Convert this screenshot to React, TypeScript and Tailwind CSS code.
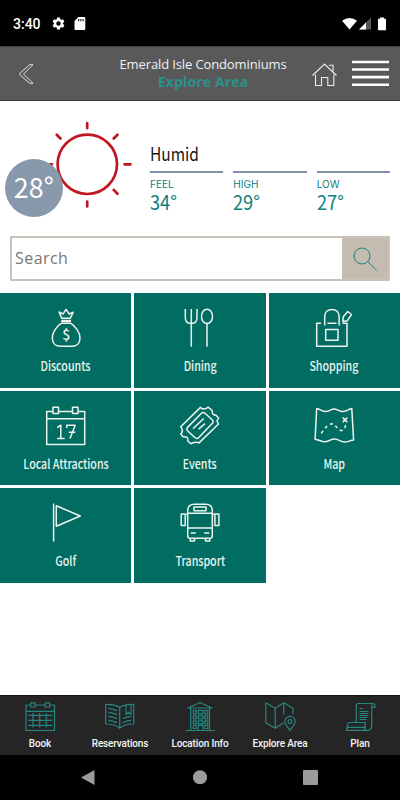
import * as React from "react";

const NOTO = "font-['Noto_Sans_CJK_SC',sans-serif]";

function TileIcon({ children }: { children: React.ReactNode }) {
    return (
        <svg viewBox="0 0 44 44" className="size-11 shrink-0" fill="none" stroke="#eef3ee" strokeWidth="1.5" strokeLinejoin="round">
            {children}
        </svg>
    );
}

function TabIcon({ children }: { children: React.ReactNode }) {
    return (
        <svg viewBox="0 0 36 36" className="size-9 shrink-0" fill="none" stroke="#268681" strokeWidth="1.2" strokeLinejoin="round">
            {children}
        </svg>
    );
}

const tiles = [
    {
        label: "Discounts",
        icon: (
            <TileIcon>
                <path d="M17.7 13.3 15 7l4 2 3-4.700L25.200 9l4-1.800-3 6.100Z" />
                <path d="M17.200 16h9.800" strokeWidth="2.400" />
                <path d="M17.500 18.200h9C31 21 36 27 36 33c0 5.600-3.600 8.300-8 8.300H16.500c-4.500 0-8.200-2.700-8.200-8.300 0-6 4.700-12 9.200-14.800Z" />
                <text x="22.200" y="34.800" textAnchor="middle" className="font-['Noto_Sans_CJK_SC',sans-serif] text-[14px] font-medium" fill="#eef3ee" stroke="none">$</text>
            </TileIcon>
        ),
    },
    {
        label: "Dining",
        icon: (
            <TileIcon>
                <path d="M7.300 4v8.500c0 4 2 6 6 6s5.700-2 5.700-6V4M13.300 4v37.700" />
                <ellipse cx="29" cy="11.400" rx="5.500" ry="7.200" />
                <path d="M29 18.600v23.100" />
            </TileIcon>
        ),
    },
    {
        label: "Shopping",
        icon: (
            <TileIcon>
                <path d="M9 18.300H4.700v23H35v-23h-4.500M15.500 18.300h9" />
                <path d="M12.700 20.500v-9c0-4.500 3-7 7.200-7s7.200 2.500 7.200 7v9" />
                <path d="M13.700 24.500H26v10.800H13.700z" />
                <path d="m35.700 6.500 3.800 3-4.300 6.300-4.400.7.500-4.800Z" />
            </TileIcon>
        ),
    },
    {
        label: "Local Attractions",
        icon: (
            <TileIcon>
                <path d="M9 8.500H2.700v33H40.700v-33H34.300M14.700 8.500h13.600M2.700 15.700h38" />
                <path d="M9 4.200h5.500v6.300H9zM28.500 4.200H34v6.300h-5.500z" />
                <path d="m13.200 24.700 3.600-2.600v13.400M13 35.500h7.700M22.700 25v-2.800h8.500l-5.200 13.300M24.700 29.300h6.600" />
            </TileIcon>
        ),
    },
    {
        label: "Events",
        icon: (
            <TileIcon>
                <path d="M22.500 4.400c2 2.200 5 1.900 7.700-.2l4 3.300c-.6 2.600.5 4.500 3.800 4.800l2.800 3c-2.300 1.300-2 3.300-.3 5.700L21 39.900c-3-1.700-5-.6-8 .8L9.700 38c1-3-1-4.800-4.600-4.200L2.700 31c2-2 2.300-4.500 0-7.200Z" />
                <path d="M23.200 10.500c1.300-1.200 2.700-1.200 4 0l7 6.300c1.300 1.200 1.200 2.500 0 3.700L20.800 34.400c-1.300 1.400-2.600 1.400-4 .1l-7-6.500c-1.300-1.200-1.300-2.600 0-3.900Z" />
                <path d="m15 25.700 10.700-10.200M20.500 26.300l6.500-5.700" />
            </TileIcon>
        ),
    },
    {
        label: "Map",
        icon: (
            <TileIcon>
                <path d="M4.700 5.600c3.500.6 6 3.200 9.300 3 3-.2 5-2.500 8-2.500s5.500 2.300 8.500 2.500c3.200.2 6-2.400 9.300-3l1.800 31.500c-3.300.2-6 2.200-9.300 2-3.300-.2-6.300-3-9.800-3s-6.500 2.700-9.800 2.700-6.300-2.300-9.600-2.600Z" />
                <path d="M9.300 30.300c3-4.500 6.500-9 10.700-9.500 4.500.2 4.700 7 10.300 6.700 2.700-.4 3.200-4 3.300-6.500" strokeDasharray="3 3.200" />
                <path d="m30.800 14.600 4.500 4.500M35.300 14.600l-4.500 4.500" />
            </TileIcon>
        ),
    },
    {
        label: "Golf",
        icon: (
            <TileIcon>
                <path d="M9.600 3.500v38M12.300 5.800 36.300 16l-24 10.300Z" />
            </TileIcon>
        ),
    },
    {
        label: "Transport",
        icon: (
            <TileIcon>
                <path d="M9.700 36V10.700c0-4.200 2.500-6.500 6.500-6.500h11.600c4 0 6.500 2.300 6.500 6.500V36c0 1.500-.8 2.300-2.300 2.300H12c-1.500 0-2.300-.8-2.300-2.300ZM9.700 13.200h24.600M9.700 28h24.600" />
                <path d="M16 7h12v3.700H16zM3.200 14h4v11.500h-4zM36.900 14h4v11.500h-4zM7.200 14.200h2.500M34.300 14.200h2.600" />
                <path d="M12.800 33h5M26.200 33h5M12.200 38.500V41h4.300v-2.500M27.500 38.500V41h4.300v-2.500" />
            </TileIcon>
        ),
    },
];

const tabs = [
    {
        label: "Book",
        icon: (
            <TabIcon>
                <path d="M8.500 6H4v25.500h28.500V6h-4.700M13 6h10.300M4 12.300h28.500" />
                <path d="M8.700 3.800H13V8H8.700zM23.300 3.800h4.300V8h-4.300z" />
                <path d="M6.300 16.300h24M6.300 21.300h24M6.300 26.300h24M11 14v14.500M17.700 14v14.500M24.300 14v14.500" />
            </TabIcon>
        ),
    },
    {
        label: "Reservations",
        icon: (
            <TabIcon>
                <path d="M17.700 8.300C14 5.800 10 5.200 3.700 5.300V25c6 0 10.500 1 14 4.300 3.500-3.300 8-4.300 14-4.300V5.300c-6.300-.1-10.300.5-14 3ZM17.700 8.300v21" />
                <path d="M6.500 9.300c3 .2 5.700 1 8.500 2.300M6.500 13.300c3 .2 5.700 1 8.500 2.300M6.500 17.300c3 .2 5.700 1 8.500 2.300M6.500 21.300c3 .2 5.700 1 8.500 2.300M20.500 19.700c2.800-1.300 5.500-2 8.500-2.300M20.500 23.700c2.800-1.300 5.500-2 8.500-2.300" />
                <path d="M24 6.300v9.200l2.500-2.300 2.500 2.300V5.500" />
            </TabIcon>
        ),
    },
    {
        label: "Location Info",
        icon: (
            <TabIcon>
                <path d="M6 9 18 3.500 30 9ZM8.700 9v22.300M27.500 9v22.300M3.700 31.500h29" />
                <path d="M11.300 11.300h3v3.500h-3zM16.300 11.300H21v3.500h-4.700zM22.800 11.300h3v3.500h-3zM11.300 16.800h3v3h-3zM16.300 16.800H21v3h-4.700zM22.800 16.800h3v3h-3zM11.300 21.800h3v3h-3zM16.300 21.800H21v3h-4.700zM22.800 21.800h3v3h-3zM11.300 26.500h3v3h-3zM22.800 26.500h3v3h-3zM16.300 31.300v-5H21v5" />
            </TabIcon>
        ),
    },
    {
        label: "Explore Area",
        icon: (
            <TabIcon>
                <path d="m3.800 3.800 9.400 5.500 8.500-5.500 9.300 5.500v6M3.800 3.800v20l9.400 5.500 8.300-5.200M13.200 9.300v20M21.700 3.800v12" />
                <path d="M28 31.500c-2.600-3.800-5.200-6-5.200-9a5.200 5.200 0 0 1 10.400 0c0 3-2.600 5.200-5.200 9Z" />
                <circle cx="28" cy="22.500" r="1.900" />
            </TabIcon>
        ),
    },
    {
        label: "Plan",
        icon: (
            <TabIcon>
                <path d="M14.300 23.500V6.500c0-1.300.7-2 2-2H31c1.300 0 2 .7 2 2v2h-3.300M30.700 4.500c-.8 1-1 2-1 4V26c0 3.500-1 5.300-3.800 5.300H4.300c1.700-1.500 1-4.300 1.500-6.500.2-.8.700-1.300 1.600-1.300h16c-.7 2.500.2 5.600-1.300 7.800" />
                <path d="M4.500 28.300H24M17.500 9.500h3.800M17.500 12.500h9M17.500 14.500h9M17.500 16.500h9M17.500 18.500h8M17.500 20.500h7" />
            </TabIcon>
        ),
    },
];

const temps = [
    { label: "FEEL", value: "34°" },
    { label: "HIGH", value: "29°" },
    { label: "LOW", value: "27°" },
];

function StatusBar() {
    return (
        <div className="flex h-[46px] items-center bg-black pl-[13px] pr-3 text-white">
            <span className="pt-0.5 font-['Roboto',sans-serif] text-[14px] font-medium leading-none">3:40</span>
            <svg viewBox="0 0 24 24" className="ml-[10px] size-[15px]" fill="#fff">
                <path d="M19.140 12.940a7 7 0 0 0 0-1.880l2.030-1.580a.5.5 0 0 0 .12-.61l-1.920-3.320a.5.5 0 0 0-.59-.22l-2.390.96a7 7 0 0 0-1.620-.94l-.36-2.540a.5.5 0 0 0-.48-.41h-3.840a.5.5 0 0 0-.47.41l-.36 2.540c-.59.24-1.130.57-1.620.94l-2.390-.96a.5.5 0 0 0-.59.22L2.740 8.870a.5.5 0 0 0 .12.61l2.030 1.580a7 7 0 0 0 0 1.880l-2.030 1.580a.5.5 0 0 0-.12.61l1.920 3.320c.12.220.37.290.59.220l2.390-.96c.5.380 1.030.7 1.620.94l.36 2.540c.05.240.24.410.48.410h3.840c.24 0 .44-.17.47-.41l.36-2.540a7 7 0 0 0 1.620-.94l2.390.96c.22.080.47 0 .59-.22l1.920-3.320a.5.5 0 0 0-.12-.61ZM12 15.600a3.600 3.600 0 1 1 0-7.200 3.600 3.600 0 0 1 0 7.200Z" />
            </svg>
            <svg viewBox="0 0 12 13" className="ml-[8px] h-[13px] w-3" fill="#fff">
                <path d="M4.500 0H10c.8 0 1.300.5 1.300 1.300v10.400c0 .8-.5 1.300-1.300 1.300H1.800C1 13 .5 12.500.5 11.700V4Z" />
                <path d="M4.700 2v2.300M6.900 2v2.300M9.100 2v2.300" stroke="#000" strokeWidth="1" />
            </svg>
            <svg viewBox="0 0 46 14" className="ml-auto mt-px h-3.5 w-[46px]">
                <path d="M0 3.800Q7.500-1.800 15 3.800L7.500 12.600Z" fill="#fff" />
                <path d="M29 .5v12H17Z" fill="#555" />
                <path d="M24 5.500v7h-7Z" fill="#fff" />
                <path d="M38 .5h4v1.200h2v11.600h-8V1.700h2Z" fill="#fff" />
            </svg>
        </div>
    );
}

function Header() {
    return (
        <header className="flex h-[55px] items-center border-y border-y-[#3d3d3e] bg-[#59595a]">
            <svg viewBox="0 0 16 20" className="ml-[18px] h-5 w-4" fill="none" stroke="#e2e2e2" strokeWidth="1">
                <path d="M11.500.7H15L5.500 10 15 19.300h-3.500L1.200 10Z" />
            </svg>
            <div className="-mt-0.5 ml-[68px] flex w-[202px] flex-col items-center whitespace-nowrap font-['Open_Sans',sans-serif]">
                <span className="text-[13px] leading-[17px] tracking-[-0.12px] text-[#f0f0f0]">Emerald Isle Condominiums</span>
                <span className="text-sm font-bold leading-[17px] tracking-[0.15px] text-[#2a918b]">Explore Area</span>
            </div>
            <svg viewBox="0 0 26 26" className="ml-[7px] mt-0.5 size-[26px]" fill="none" stroke="#ececec" strokeWidth="1.1">
                <path d="M1.500 13.500 13.500 2 25.500 13.500M18 3.200h4v6.500" />
                <path d="M4.500 12.500v11h6v-8h6.300v8h6v-11" />
            </svg>
            <svg viewBox="0 0 37 27" className="ml-[15px] h-[27px] w-[37px]" stroke="#fff" strokeWidth="2.6">
                <path d="M0 2h37M0 9.500h37M0 17.100h37M0 24.700h37" />
            </svg>
        </header>
    );
}

function Weather() {
    return (
        <section className="flex h-[135px] pt-[11px]">
            <div className="relative h-[110px] w-[150px] shrink-0">
                <svg viewBox="0 0 150 110" className="h-full w-full" fill="none" stroke="#c01522" strokeWidth="2.700" strokeLinecap="round">
                    <circle cx="87.300" cy="52.300" r="29.700" />
                    <path d="M87.200 11.200v5M87.200 89.500v5M124.500 52.300h6M46 52.300h6M56.700 22.700l3.800 3.800M117.500 22.700l-3.800 3.800M117.500 81.700l-3.800-3.800" />
                </svg>
                <div className={`absolute left-[5px] top-[47px] flex size-[58px] items-center justify-center rounded-full bg-[#8799aa] text-[28px] leading-none text-white ${NOTO}`}>
                    <span className="-mt-1 origin-center scale-x-[0.96]">28°</span>
                </div>
            </div>
            <div className={`flex-1 pr-2.5 pt-[30px] ${NOTO}`}>
                <p className="origin-left scale-x-[0.86] text-lg leading-[23px] text-[#161616]">Humid</p>
                <div className="mt-[6px] grid grid-cols-3 gap-2.5">
                    {temps.map((temp) => (
                        <div key={temp.label} className="border-t-2 border-[#7d93a9] pt-[5px] text-[#0d817b]">
                            <p className="font-['Inter',sans-serif] text-[10px] leading-3">{temp.label}</p>
                            <p className="origin-left scale-x-[0.91] text-[20px] leading-6">{temp.value}</p>
                        </div>
                    ))}
                </div>
            </div>
        </section>
    );
}

function SearchBar() {
    return (
        <div className="mx-2.5 flex h-[45px] border-2 border-[#cbc3b8]">
            <input
                type="text"
                placeholder="Search"
                className="min-w-0 flex-1 bg-white px-[3px] pb-0.5 font-['Open_Sans',sans-serif] text-base tracking-[0.45px] outline-none placeholder:text-[#777]"
            />
            <button type="button" className="flex w-[46px] items-center justify-center bg-[#c4bcb0]">
                <svg viewBox="0 0 24 24" className="size-6" fill="none" stroke="#168580" strokeWidth="1">
                    <circle cx="9" cy="9" r="8" />
                    <path d="m14.700 14.700 9 8.700" />
                </svg>
            </button>
        </div>
    );
}

export default function App() {
    const [activeTab, setActiveTab] = React.useState("Explore Area");

    return (
        <div className="flex h-[800px] w-[400px] flex-col overflow-hidden bg-white">
            <StatusBar />
            <Header />
            <main className="flex-1">
                <Weather />
                <SearchBar />
                <div className="mt-3 grid grid-cols-3 gap-[3px]">
                    {tiles.map((tile) => (
                        <a key={tile.label} className="flex h-[94.500px] flex-col items-center bg-[#006c62] pt-3">
                            {tile.icon}
                            <span className={`mt-2 scale-x-[0.82] whitespace-nowrap text-[13px] font-medium leading-[18px] text-[#edf3ee] ${NOTO}`}>{tile.label}</span>
                        </a>
                    ))}
                </div>
            </main>
            <nav className="grid h-[60px] grid-cols-5 border-t border-[#111] bg-[#252525]">
                {tabs.map((tab) => (
                    <button
                        key={tab.label}
                        type="button"
                        aria-current={activeTab === tab.label}
                        onClick={() => setActiveTab(tab.label)}
                        className="flex flex-col items-center pt-[3px]"
                    >
                        {tab.icon}
                        <span className="mt-0.5 whitespace-nowrap font-['Roboto',sans-serif] text-[10px] font-medium leading-[14px] tracking-[-0.15px] text-[#f5f5f5]">{tab.label}</span>
                    </button>
                ))}
            </nav>
            <div className="h-[45px] bg-black">
                <svg viewBox="0 0 400 45" className="h-full w-full" fill="#9b9b9b">
                    <path d="M81 22.500 94.500 15v15Z" />
                    <circle cx="200" cy="22.300" r="7" />
                    <rect x="303" y="15" width="15" height="15" rx="1" />
                </svg>
            </div>
        </div>
    );
}
